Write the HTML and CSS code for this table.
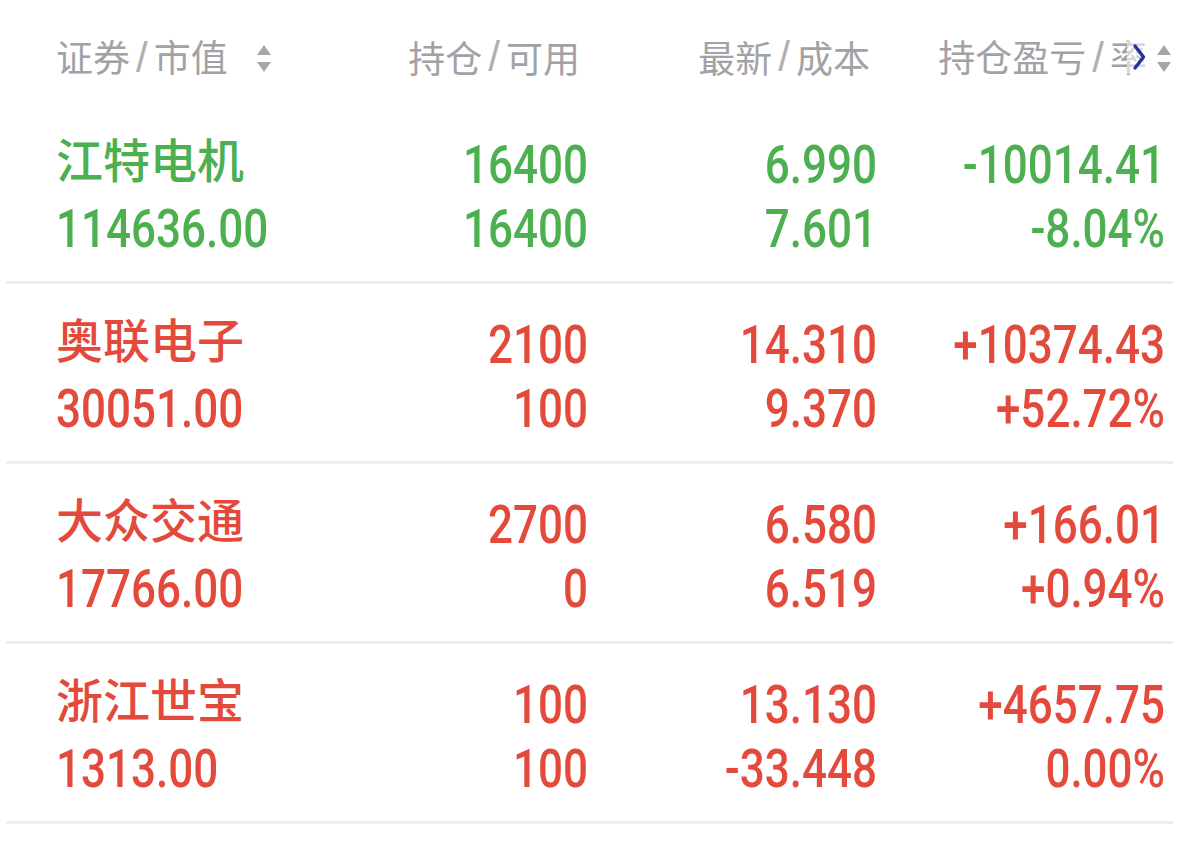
FILE: index.html
```html
<!DOCTYPE html>
<html lang="zh-CN">
<head>
<meta charset="utf-8">
<title>持仓</title>
<link rel="stylesheet" href="styles.css">
</head>
<body>
<div class="list">
  <div class="head">
    <div class="hcell h1"><span>证券<span class="sl">/</span>市值</span><span class="sort"><i class="up"></i><i class="down"></i></span></div>
    <div class="hcell h2">持仓<span class="sl">/</span>可用</div>
    <div class="hcell h3">最新<span class="sl">/</span>成本</div>
    <div class="hcell h4"><span class="htext">持仓盈亏<span class="sl">/</span>率</span><span class="more"><svg width="16" height="30" viewBox="0 0 16 30"><path d="M4 4 L12.5 15 L4 26" fill="none" stroke="#22339c" stroke-width="3.4" stroke-linecap="round" stroke-linejoin="round"/></svg></span><span class="sort"><i class="up"></i><i class="down"></i></span></div>
  </div>

  <div class="row down">
    <div class="c1"><div class="name">江特电机</div><div class="num">114636.00</div></div>
    <div class="c"><div class="num">16400</div><div class="num">16400</div></div>
    <div class="c"><div class="num">6.990</div><div class="num">7.601</div></div>
    <div class="c"><div class="num">-10014.41</div><div class="num">-8.04%</div></div>
  </div>

  <div class="row up">
    <div class="c1"><div class="name">奥联电子</div><div class="num">30051.00</div></div>
    <div class="c"><div class="num">2100</div><div class="num">100</div></div>
    <div class="c"><div class="num">14.310</div><div class="num">9.370</div></div>
    <div class="c"><div class="num">+10374.43</div><div class="num">+52.72%</div></div>
  </div>

  <div class="row up">
    <div class="c1"><div class="name">大众交通</div><div class="num">17766.00</div></div>
    <div class="c"><div class="num">2700</div><div class="num">0</div></div>
    <div class="c"><div class="num">6.580</div><div class="num">6.519</div></div>
    <div class="c"><div class="num">+166.01</div><div class="num">+0.94%</div></div>
  </div>

  <div class="row up">
    <div class="c1"><div class="name">浙江世宝</div><div class="num">1313.00</div></div>
    <div class="c"><div class="num">100</div><div class="num">100</div></div>
    <div class="c"><div class="num">13.130</div><div class="num">-33.448</div></div>
    <div class="c"><div class="num">+4657.75</div><div class="num">0.00%</div></div>
  </div>
</div>
</body>
</html>
```

FILE: styles.css
```css
html, body {
  margin: 0;
  padding: 0;
  background: #ffffff;
}
body {
  width: 1179px;
  height: 847px;
  overflow: hidden;
  font-family: "Noto Sans CJK SC", "Noto Sans", sans-serif;
}
.list {
  margin: 0 6px;
}
.head {
  display: grid;
  grid-template-columns: 250px 282px 289px 288px;
  padding: 24px 8px 16px 50px;
  height: 64px;
  line-height: 64px;
  font-size: 37px;
  color: #a2a2a6;
}
.sl {
  margin: 0 6px;
  font-family: "Liberation Sans", sans-serif;
  font-size: 42px;
  font-weight: 300;
  color: #b0b0b4;
}
.hcell {
  display: flex;
  align-items: center;
  white-space: nowrap;
}
.h1 { gap: 29px; }
.h2 { justify-content: flex-end; padding-right: 8px; }
.h3 { justify-content: flex-end; padding-right: 7px; }
.h4 {
  justify-content: flex-end;
  margin-right: -7px;
  position: relative;
  gap: 10px;
}
.sort {
  display: flex;
  flex-direction: column;
  gap: 7px;
  width: 15px;
  margin-top: 3px;
}
.sort i {
  display: block;
  width: 0;
  height: 0;
  border-left: 7.5px solid transparent;
  border-right: 7.5px solid transparent;
}
.sort .up { border-bottom: 10px solid #a6a6aa; }
.sort .down { border-top: 10px solid #a6a6aa; }
.more {
  position: absolute;
  right: 21px;
  top: 16px;
  width: 24px;
  height: 34px;
  background: rgba(255, 255, 255, 0.55);
  display: flex;
  align-items: center;
  justify-content: center;
}
.more svg { display: block; }

.row {
  display: grid;
  grid-template-columns: 250px 282px 289px 288px;
  padding: 27px 8px 22px 50px;
  border-bottom: 3px solid #ededed;
  line-height: 64px;
}
.row.down { color: #4caf50; }
.row.up { color: #e44a3b; }
.c { text-align: right; }
.name {
  font-family: "Noto Sans CJK SC", sans-serif;
  font-size: 47px;
  font-weight: 500;
  height: 64px;
  line-height: 54px;
}
.num {
  font-family: Roboto, "Liberation Sans", sans-serif;
  font-size: 53px;
  font-weight: 500;
  height: 64px;
  line-height: 68px;
  white-space: nowrap;
  transform: scaleX(0.83);
}
.c .num { transform-origin: right center; }
.c1 .num { transform-origin: left center; }
```
